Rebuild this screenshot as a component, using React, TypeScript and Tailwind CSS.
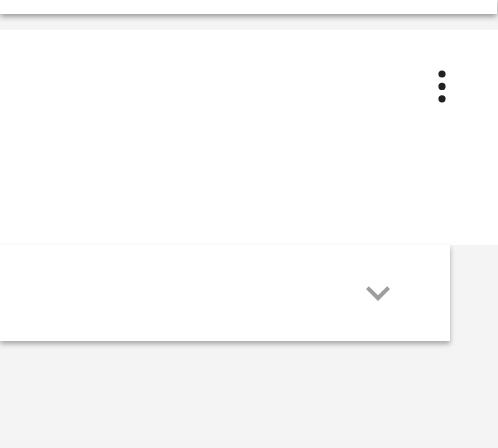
import React from "react";

const MoreVert = () => (
  <svg width="48" height="48" viewBox="0 0 24 24" fill="#212121">
    <circle cx="12" cy="6" r="1.8" />
    <circle cx="12" cy="12.2" r="1.8" />
    <circle cx="12" cy="18.4" r="1.8" />
  </svg>
);

const ExpandMore = () => (
  <svg width="48" height="48" viewBox="0 0 24 24" fill="#9e9e9e">
    <path d="M16.59 8.59L12 13.17 7.41 8.59 6 10l6 6 6-6z" />
  </svg>
);

export default function App() {
  return (
    <div className="w-[498px] h-[448px] bg-[#f4f4f4] overflow-hidden font-['Roboto',sans-serif]">
      {/* top app bar edge */}
      <div className="h-[14px] w-[497px] bg-white shadow-[0_2px_6px_rgba(0,0,0,0.45)] relative z-10" />
      <div className="h-[16px]" />

      {/* header panel */}
      <div className="h-[215px] bg-white flex justify-end items-start pr-[32px] pt-[32px]">
        <MoreVert />
      </div>

      {/* collapsed card */}
      <div className="w-[450px] h-[96px] bg-white shadow-[0_3px_5px_rgba(0,0,0,0.32)] flex items-center justify-end pr-[48px]">
        <ExpandMore />
      </div>
    </div>
  );
}
